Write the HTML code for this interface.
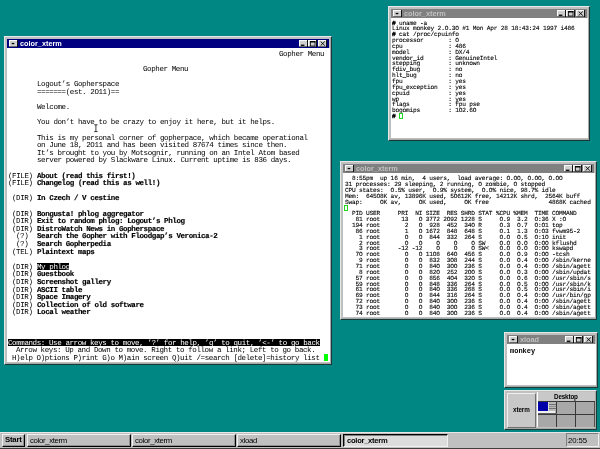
<!DOCTYPE html>
<html><head><meta charset="utf-8"><style>
*{margin:0;padding:0;box-sizing:border-box}
html,body{width:600px;height:449px;overflow:hidden;background:#008784;position:relative}
div{position:absolute}
.frame{background:#c0c0c0;border:1px solid;border-color:#e8e8e8 #1a3a3a #1a3a3a #e8e8e8;box-shadow:inset -1px -1px 0 #a8a8a8}
.act{background:#000080}
.ina{background:#808080}
.ttl{font-family:"Liberation Sans",sans-serif;font-weight:bold;font-size:7.3px;line-height:9px;white-space:pre;will-change:transform}
.act .ttl{color:#fff}
.ina .ttl{color:#c0c0c0}
.btn{background:#c0c0c0;border:1px solid;border-color:#fff #000 #000 #fff;box-shadow:inset -1px -1px 0 #808080}
.client{background:#fff}
.tbtn{background:#c0c0c0;border:1px solid;border-color:#f0f0f0 #000 #000 #f0f0f0;box-shadow:inset -1px -1px 0 #909090}
.inv{background:#000}
.t7{font-family:"Liberation Mono",monospace;font-size:7.5px;letter-spacing:-0.4007px;line-height:7.6px;white-space:pre;color:#000;will-change:transform;text-rendering:geometricPrecision}
.t7.b{font-weight:bold;-webkit-text-stroke:0.15px #000}
.t7.w{color:#fff}
.t6{font-family:"Liberation Mono",monospace;font-size:6.2px;letter-spacing:-0.204px;line-height:5.846px;white-space:pre;color:#000;will-change:transform;text-rendering:geometricPrecision;-webkit-text-stroke:0.1px #000}
.g{font-family:"Liberation Sans",sans-serif;white-space:pre;will-change:transform;color:#000}
svg{position:absolute}
</style></head>
<body>
<div class="frame" style="left:4px;top:36px;width:328px;height:329px"></div>
<div class="act" style="left:7px;top:38.6px;width:322px;height:9.8px"><svg width="9.0" height="7.6" viewBox="0 0 9.0 7.6" style="left:1.60px;top:1.20px"><rect x="0" y="0" width="9.0" height="7.6" fill="#d0d0d0"/><rect x="0" y="0" width="9.0" height="0.9" fill="#fff"/><rect x="0" y="0" width="0.9" height="7.6" fill="#fff"/><rect x="0" y="6.5" width="9.0" height="1.1" fill="#000"/><rect x="8.1" y="0" width="0.9" height="7.6" fill="#000"/><rect x="2.7" y="2.9" width="2.6" height="1.3" fill="#000"/></svg><div class="ttl" style="left:13px;top:0px">color_xterm</div><svg width="9.0" height="7.6" viewBox="0 0 9.0 7.6" style="left:291.80px;top:1.20px"><rect x="0" y="0" width="9.0" height="7.6" fill="#d0d0d0"/><rect x="0" y="0" width="9.0" height="0.9" fill="#fff"/><rect x="0" y="0" width="0.9" height="7.6" fill="#fff"/><rect x="0" y="6.5" width="9.0" height="1.1" fill="#000"/><rect x="8.1" y="0" width="0.9" height="7.6" fill="#000"/><rect x="1.8" y="4.6" width="3.6" height="1.3" fill="#000"/></svg><svg width="9.0" height="7.6" viewBox="0 0 9.0 7.6" style="left:300.80px;top:1.20px"><rect x="0" y="0" width="9.0" height="7.6" fill="#d0d0d0"/><rect x="0" y="0" width="9.0" height="0.9" fill="#fff"/><rect x="0" y="0" width="0.9" height="7.6" fill="#fff"/><rect x="0" y="6.5" width="9.0" height="1.1" fill="#000"/><rect x="8.1" y="0" width="0.9" height="7.6" fill="#000"/><rect x="2.4" y="1.5" width="4.6" height="4.5" fill="none" stroke="#000" stroke-width="0.75"/><rect x="2.0" y="1.2" width="5.4" height="1.3" fill="#000"/></svg><svg width="9.0" height="7.6" viewBox="0 0 9.0 7.6" style="left:311.40px;top:1.20px"><rect x="0" y="0" width="9.0" height="7.6" fill="#d0d0d0"/><rect x="0" y="0" width="9.0" height="0.9" fill="#fff"/><rect x="0" y="0" width="0.9" height="7.6" fill="#fff"/><rect x="0" y="6.5" width="9.0" height="1.1" fill="#000"/><rect x="8.1" y="0" width="0.9" height="7.6" fill="#000"/><path d="M2.6 1.5 L6.8 5.6 M6.8 1.5 L2.6 5.6" stroke="#000" stroke-width="0.9"/></svg></div>
<div class="client" style="left:7px;top:48.4px;width:322.5px;height:313.6px"></div>

<div class="t7 n" style="left:278.60px;top:52.00px">Gopher Menu</div>
<div class="t7 n" style="left:143.30px;top:67.20px">Gopher Menu</div>
<div class="t7 n" style="left:36.70px;top:82.40px">Logout’s Gopherspace</div>
<div class="t7 n" style="left:36.70px;top:90.00px">=======(est. 2O11)==</div>
<div class="t7 n" style="left:36.70px;top:105.20px">Welcome.</div>
<div class="t7 n" style="left:36.70px;top:120.40px">You don’t have to be crazy to enjoy it here, but it helps.</div>
<div class="t7 n" style="left:36.70px;top:135.60px">This is my personal corner of gopherpace, which became operational</div>
<div class="t7 n" style="left:36.70px;top:143.20px">on June 18, 2O11 and has been visited 87674 times since then.</div>
<div class="t7 n" style="left:36.70px;top:150.80px">It’s brought to you by Motsognir, running on an Intel Atom based</div>
<div class="t7 n" style="left:36.70px;top:158.40px">server powered by Slackware Linux. Current uptime is 836 days.</div>
<div class="t7 n" style="left:8.00px;top:173.60px">(FILE)</div>
<div class="t7 b" style="left:36.70px;top:173.60px">About (read this first!)</div>
<div class="t7 n" style="left:8.00px;top:181.20px">(FILE)</div>
<div class="t7 b" style="left:36.70px;top:181.20px">Changelog (read this as well!)</div>
<div class="t7 n" style="left:12.10px;top:196.40px">(DIR)</div>
<div class="t7 b" style="left:36.70px;top:196.40px">In Czech / V cestine</div>
<div class="t7 n" style="left:12.10px;top:211.60px">(DIR)</div>
<div class="t7 b" style="left:36.70px;top:211.60px">Bongusta! phlog aggregator</div>
<div class="t7 n" style="left:12.10px;top:219.20px">(DIR)</div>
<div class="t7 b" style="left:36.70px;top:219.20px">Exit to random phlog: Logout’s Phlog</div>
<div class="t7 n" style="left:12.10px;top:226.80px">(DIR)</div>
<div class="t7 b" style="left:36.70px;top:226.80px">DistroWatch News in Gopherspace</div>
<div class="t7 n" style="left:16.20px;top:234.40px">(?)</div>
<div class="t7 b" style="left:36.70px;top:234.40px">Search the Gopher with Floodgap’s Veronica-2</div>
<div class="t7 n" style="left:16.20px;top:242.00px">(?)</div>
<div class="t7 b" style="left:36.70px;top:242.00px">Search Gopherpedia</div>
<div class="t7 n" style="left:12.10px;top:249.60px">(TEL)</div>
<div class="t7 b" style="left:36.70px;top:249.60px">Plaintext maps</div>
<div class="t7 n" style="left:12.10px;top:264.80px">(DIR)</div>
<div class="inv" style="left:36.70px;top:262.50px;width:32.80px;height:7.60px"></div>
<div class="t7 w" style="left:36.70px;top:264.80px">My phlog</div>
<div class="t7 n" style="left:12.10px;top:272.40px">(DIR)</div>
<div class="t7 b" style="left:36.70px;top:272.40px">Guestbook</div>
<div class="t7 n" style="left:12.10px;top:280.00px">(DIR)</div>
<div class="t7 b" style="left:36.70px;top:280.00px">Screenshot gallery</div>
<div class="t7 n" style="left:12.10px;top:287.60px">(DIR)</div>
<div class="t7 b" style="left:36.70px;top:287.60px">ASCII table</div>
<div class="t7 n" style="left:12.10px;top:295.20px">(DIR)</div>
<div class="t7 b" style="left:36.70px;top:295.20px">Space Imagery</div>
<div class="t7 n" style="left:12.10px;top:302.80px">(DIR)</div>
<div class="t7 b" style="left:36.70px;top:302.80px">Collection of old software</div>
<div class="t7 n" style="left:12.10px;top:310.40px">(DIR)</div>
<div class="t7 b" style="left:36.70px;top:310.40px">Local weather</div>
<div class="inv" style="left:8.00px;top:338.50px;width:311.60px;height:7.60px"></div>
<div class="t7 w" style="left:8.00px;top:340.80px">Commands: Use arrow keys to move, ’?’ for help, ’q’ to quit, ’&lt;-’ to go back</div>
<div class="t7 n" style="left:16.20px;top:348.40px">Arrow keys: Up and Down to move. Right to follow a link; Left to go back.</div>
<div class="t7 n" style="left:12.10px;top:356.00px">H)elp O)ptions P)rint G)o M)ain screen Q)uit /=search [delete]=history list</div>
<div style="left:324px;top:354px;width:4px;height:7px;background:#00ff00"></div>
<svg width="6" height="9" style="left:93px;top:123.5px"><path d="M1.2 0.8 H4.6 M2.9 0.8 V7.6 M1.2 7.6 H4.6" stroke="#000" stroke-width="0.75" fill="none"/></svg>
<div class="frame" style="left:388px;top:6px;width:202px;height:135px"></div>
<div class="ina" style="left:391px;top:8.6px;width:196px;height:9.8px"><svg width="9.0" height="7.6" viewBox="0 0 9.0 7.6" style="left:1.60px;top:1.20px"><rect x="0" y="0" width="9.0" height="7.6" fill="#d0d0d0"/><rect x="0" y="0" width="9.0" height="0.9" fill="#fff"/><rect x="0" y="0" width="0.9" height="7.6" fill="#fff"/><rect x="0" y="6.5" width="9.0" height="1.1" fill="#000"/><rect x="8.1" y="0" width="0.9" height="7.6" fill="#000"/><rect x="2.7" y="2.9" width="2.6" height="1.3" fill="#000"/></svg><div class="ttl" style="left:13px;top:0px">color_xterm</div><svg width="9.0" height="7.6" viewBox="0 0 9.0 7.6" style="left:165.80px;top:1.20px"><rect x="0" y="0" width="9.0" height="7.6" fill="#d0d0d0"/><rect x="0" y="0" width="9.0" height="0.9" fill="#fff"/><rect x="0" y="0" width="0.9" height="7.6" fill="#fff"/><rect x="0" y="6.5" width="9.0" height="1.1" fill="#000"/><rect x="8.1" y="0" width="0.9" height="7.6" fill="#000"/><rect x="1.8" y="4.6" width="3.6" height="1.3" fill="#000"/></svg><svg width="9.0" height="7.6" viewBox="0 0 9.0 7.6" style="left:174.80px;top:1.20px"><rect x="0" y="0" width="9.0" height="7.6" fill="#d0d0d0"/><rect x="0" y="0" width="9.0" height="0.9" fill="#fff"/><rect x="0" y="0" width="0.9" height="7.6" fill="#fff"/><rect x="0" y="6.5" width="9.0" height="1.1" fill="#000"/><rect x="8.1" y="0" width="0.9" height="7.6" fill="#000"/><rect x="2.4" y="1.5" width="4.6" height="4.5" fill="none" stroke="#000" stroke-width="0.75"/><rect x="2.0" y="1.2" width="5.4" height="1.3" fill="#000"/></svg><svg width="9.0" height="7.6" viewBox="0 0 9.0 7.6" style="left:185.40px;top:1.20px"><rect x="0" y="0" width="9.0" height="7.6" fill="#d0d0d0"/><rect x="0" y="0" width="9.0" height="0.9" fill="#fff"/><rect x="0" y="0" width="0.9" height="7.6" fill="#fff"/><rect x="0" y="6.5" width="9.0" height="1.1" fill="#000"/><rect x="8.1" y="0" width="0.9" height="7.6" fill="#000"/><path d="M2.6 1.5 L6.8 5.6 M6.8 1.5 L2.6 5.6" stroke="#000" stroke-width="0.9"/></svg></div>
<div class="client" style="left:391px;top:18.4px;width:196.5px;height:119.6px"></div>

<div class="t6" style="left:392.40px;top:20.50px"><span style="font-weight:bold;-webkit-text-stroke:0.4px #000">#</span> uname -a</div>
<div class="t6" style="left:392.40px;top:26.35px">Linux monkey 2.O.3O #1 Mon Apr 28 18:43:24 1997 i486</div>
<div class="t6" style="left:392.40px;top:32.19px"><span style="font-weight:bold;-webkit-text-stroke:0.4px #000">#</span> cat /proc/cpuinfo</div>
<div class="t6" style="left:392.40px;top:38.04px">processor       : O</div>
<div class="t6" style="left:392.40px;top:43.88px">cpu             : 486</div>
<div class="t6" style="left:392.40px;top:49.73px">model           : DX/4</div>
<div class="t6" style="left:392.40px;top:55.58px">vendor_id       : GenuineIntel</div>
<div class="t6" style="left:392.40px;top:61.42px">stepping        : unknown</div>
<div class="t6" style="left:392.40px;top:67.27px">fdiv_bug        : no</div>
<div class="t6" style="left:392.40px;top:73.11px">hlt_bug         : no</div>
<div class="t6" style="left:392.40px;top:78.96px">fpu             : yes</div>
<div class="t6" style="left:392.40px;top:84.81px">fpu_exception   : yes</div>
<div class="t6" style="left:392.40px;top:90.65px">cpuid           : yes</div>
<div class="t6" style="left:392.40px;top:96.50px">wp              : yes</div>
<div class="t6" style="left:392.40px;top:102.34px">flags           : fpu pse</div>
<div class="t6" style="left:392.40px;top:108.19px">bogomips        : 1O2.6O</div>
<div class="t6" style="left:392.40px;top:114.04px"><span style="font-weight:bold;-webkit-text-stroke:0.4px #000">#</span></div>
<div style="left:399.3px;top:113.2px;width:3.6px;height:6px;border:0.7px solid #20d820"></div>
<div class="frame" style="left:340px;top:161px;width:257px;height:159px"></div>
<div class="ina" style="left:343px;top:163.6px;width:251px;height:9.8px"><svg width="9.0" height="7.6" viewBox="0 0 9.0 7.6" style="left:1.60px;top:1.20px"><rect x="0" y="0" width="9.0" height="7.6" fill="#d0d0d0"/><rect x="0" y="0" width="9.0" height="0.9" fill="#fff"/><rect x="0" y="0" width="0.9" height="7.6" fill="#fff"/><rect x="0" y="6.5" width="9.0" height="1.1" fill="#000"/><rect x="8.1" y="0" width="0.9" height="7.6" fill="#000"/><rect x="2.7" y="2.9" width="2.6" height="1.3" fill="#000"/></svg><div class="ttl" style="left:13px;top:0px">color_xterm</div><svg width="9.0" height="7.6" viewBox="0 0 9.0 7.6" style="left:220.80px;top:1.20px"><rect x="0" y="0" width="9.0" height="7.6" fill="#d0d0d0"/><rect x="0" y="0" width="9.0" height="0.9" fill="#fff"/><rect x="0" y="0" width="0.9" height="7.6" fill="#fff"/><rect x="0" y="6.5" width="9.0" height="1.1" fill="#000"/><rect x="8.1" y="0" width="0.9" height="7.6" fill="#000"/><rect x="1.8" y="4.6" width="3.6" height="1.3" fill="#000"/></svg><svg width="9.0" height="7.6" viewBox="0 0 9.0 7.6" style="left:229.80px;top:1.20px"><rect x="0" y="0" width="9.0" height="7.6" fill="#d0d0d0"/><rect x="0" y="0" width="9.0" height="0.9" fill="#fff"/><rect x="0" y="0" width="0.9" height="7.6" fill="#fff"/><rect x="0" y="6.5" width="9.0" height="1.1" fill="#000"/><rect x="8.1" y="0" width="0.9" height="7.6" fill="#000"/><rect x="2.4" y="1.5" width="4.6" height="4.5" fill="none" stroke="#000" stroke-width="0.75"/><rect x="2.0" y="1.2" width="5.4" height="1.3" fill="#000"/></svg><svg width="9.0" height="7.6" viewBox="0 0 9.0 7.6" style="left:240.40px;top:1.20px"><rect x="0" y="0" width="9.0" height="7.6" fill="#d0d0d0"/><rect x="0" y="0" width="9.0" height="0.9" fill="#fff"/><rect x="0" y="0" width="0.9" height="7.6" fill="#fff"/><rect x="0" y="6.5" width="9.0" height="1.1" fill="#000"/><rect x="8.1" y="0" width="0.9" height="7.6" fill="#000"/><path d="M2.6 1.5 L6.8 5.6 M6.8 1.5 L2.6 5.6" stroke="#000" stroke-width="0.9"/></svg></div>
<div class="client" style="left:343px;top:173.4px;width:251.5px;height:143.6px"></div>

<div class="t6" style="left:344.50px;top:176.30px">  8:55pm  up 16 min,  4 users,  load average: O.OO, O.OO, O.OO</div>
<div class="t6" style="left:344.50px;top:182.15px">31 processes: 29 sleeping, 2 running, O zombie, O stopped</div>
<div class="t6" style="left:344.50px;top:187.99px">CPU states:  O.5% user,  O.9% system,  O.O% nice, 98.7% idle</div>
<div class="t6" style="left:344.50px;top:193.84px">Mem:  645O8K av, 13896K used, 5O612K free, 14212K shrd,  2564K buff</div>
<div class="t6" style="left:344.50px;top:199.68px">Swap:     OK av,     OK used,     OK free                 4868K cached</div>
<div class="t6" style="left:344.50px;top:211.38px">  PID USER     PRI  NI SIZE  RES SHRD STAT %CPU %MEM  TIME COMMAND</div>
<div class="t6" style="left:344.50px;top:217.22px">   81 root      13   O 3772 2O92 1228 S     O.9  3.2  O:36 X :O</div>
<div class="t6" style="left:344.50px;top:223.07px">  194 root       2   O  928  452  34O R     O.3  O.7  O:O1 top</div>
<div class="t6" style="left:344.50px;top:228.91px">   86 root       1   O 1672  848  648 S     O.1  1.3  O:O3 fvwm95-2</div>
<div class="t6" style="left:344.50px;top:234.76px">    1 root       O   O  844  332  264 S     O.O  O.5  O:1O init</div>
<div class="t6" style="left:344.50px;top:240.61px">    2 root       O   O    O    O    O SW    O.O  O.O  O:OO kflushd</div>
<div class="t6" style="left:344.50px;top:246.45px">    3 root     -12 -12    O    O    O SW&lt;   O.O  O.O  O:OO kswapd</div>
<div class="t6" style="left:344.50px;top:252.30px">   7O root       O   O 11O8  64O  456 S     O.O  O.9  O:OO -tcsh</div>
<div class="t6" style="left:344.50px;top:258.14px">    9 root       O   O  832  3O8  244 S     O.O  O.4  O:OO /sbin/kerne</div>
<div class="t6" style="left:344.50px;top:263.99px">   71 root       O   O  84O  3OO  236 S     O.O  O.4  O:OO /sbin/agett</div>
<div class="t6" style="left:344.50px;top:269.84px">    8 root       O   O  82O  252  2OO S     O.O  O.3  O:OO /sbin/updat</div>
<div class="t6" style="left:344.50px;top:275.68px">   57 root       O   O  856  4O4  32O S     O.O  O.6  O:OO /usr/sbin/s</div>
<div class="t6" style="left:344.50px;top:281.53px">   59 root       O   O  848  336  264 S     O.O  O.5  O:OO /usr/sbin/k</div>
<div class="t6" style="left:344.50px;top:287.37px">   61 root       O   O  84O  336  268 S     O.O  O.5  O:OO /usr/sbin/i</div>
<div class="t6" style="left:344.50px;top:293.22px">   69 root       O   O  844  316  264 S     O.O  O.4  O:OO /usr/bin/gp</div>
<div class="t6" style="left:344.50px;top:299.07px">   72 root       O   O  84O  3OO  236 S     O.O  O.4  O:OO /sbin/agett</div>
<div class="t6" style="left:344.50px;top:304.91px">   73 root       O   O  84O  3OO  236 S     O.O  O.4  O:OO /sbin/agett</div>
<div class="t6" style="left:344.50px;top:310.76px">   74 root       O   O  84O  3OO  236 S     O.O  O.4  O:OO /sbin/agett</div>
<div style="left:344.2px;top:204.6px;width:3.6px;height:6px;border:0.7px solid #20d820"></div>
<div class="frame" style="left:504px;top:332px;width:94px;height:56px"></div>
<div class="ina" style="left:507px;top:334.6px;width:88px;height:9.8px"><svg width="9.0" height="7.6" viewBox="0 0 9.0 7.6" style="left:1.60px;top:1.20px"><rect x="0" y="0" width="9.0" height="7.6" fill="#d0d0d0"/><rect x="0" y="0" width="9.0" height="0.9" fill="#fff"/><rect x="0" y="0" width="0.9" height="7.6" fill="#fff"/><rect x="0" y="6.5" width="9.0" height="1.1" fill="#000"/><rect x="8.1" y="0" width="0.9" height="7.6" fill="#000"/><rect x="2.7" y="2.9" width="2.6" height="1.3" fill="#000"/></svg><div class="ttl" style="left:13px;top:0px">xload</div><svg width="9.0" height="7.6" viewBox="0 0 9.0 7.6" style="left:57.80px;top:1.20px"><rect x="0" y="0" width="9.0" height="7.6" fill="#d0d0d0"/><rect x="0" y="0" width="9.0" height="0.9" fill="#fff"/><rect x="0" y="0" width="0.9" height="7.6" fill="#fff"/><rect x="0" y="6.5" width="9.0" height="1.1" fill="#000"/><rect x="8.1" y="0" width="0.9" height="7.6" fill="#000"/><rect x="1.8" y="4.6" width="3.6" height="1.3" fill="#000"/></svg><svg width="9.0" height="7.6" viewBox="0 0 9.0 7.6" style="left:66.80px;top:1.20px"><rect x="0" y="0" width="9.0" height="7.6" fill="#d0d0d0"/><rect x="0" y="0" width="9.0" height="0.9" fill="#fff"/><rect x="0" y="0" width="0.9" height="7.6" fill="#fff"/><rect x="0" y="6.5" width="9.0" height="1.1" fill="#000"/><rect x="8.1" y="0" width="0.9" height="7.6" fill="#000"/><rect x="2.4" y="1.5" width="4.6" height="4.5" fill="none" stroke="#000" stroke-width="0.75"/><rect x="2.0" y="1.2" width="5.4" height="1.3" fill="#000"/></svg><svg width="9.0" height="7.6" viewBox="0 0 9.0 7.6" style="left:77.40px;top:1.20px"><rect x="0" y="0" width="9.0" height="7.6" fill="#d0d0d0"/><rect x="0" y="0" width="9.0" height="0.9" fill="#fff"/><rect x="0" y="0" width="0.9" height="7.6" fill="#fff"/><rect x="0" y="6.5" width="9.0" height="1.1" fill="#000"/><rect x="8.1" y="0" width="0.9" height="7.6" fill="#000"/><path d="M2.6 1.5 L6.8 5.6 M6.8 1.5 L2.6 5.6" stroke="#000" stroke-width="0.9"/></svg></div>
<div class="client" style="left:507px;top:344.4px;width:88.5px;height:40.6px"></div>

<div class="g" style="left:509.6px;top:347px;font-size:7px;font-weight:bold;line-height:8px;font-family:'Liberation Mono'">monkey</div>
<div class="frame" style="left:504px;top:390px;width:93px;height:40px"></div>
<div style="left:506.5px;top:392.5px;width:29.5px;height:35px;background:#c8c8c8;border:1px solid;border-color:#f0f0f0 #707070 #707070 #f0f0f0"></div>
<div class="g" style="left:512.6px;top:406px;font-size:6.3px;font-weight:bold;line-height:8px;letter-spacing:-0.1px">xterm</div>
<div style="left:536.5px;top:392px;width:58.5px;height:35px;background:#a8a8a8;border-left:1px solid #fff;border-right:1px solid #505050"></div>
<div style="left:537.5px;top:392px;width:57px;height:9.3px;background:#c8c8c8"></div>
<div class="g" style="left:553.8px;top:393.4px;font-size:6.3px;font-weight:bold;line-height:8px;letter-spacing:-0.15px">Desktop</div>
<div style="left:537.5px;top:401px;width:57px;height:1px;background:#383838"></div>
<div style="left:537.5px;top:414px;width:57px;height:1px;background:#383838"></div>
<div style="left:556px;top:401px;width:1px;height:26px;background:#383838"></div>
<div style="left:575px;top:401px;width:1px;height:26px;background:#383838"></div>
<div style="left:547.5px;top:402px;width:8.5px;height:11px;background:#b8b8b8;border-left:1px solid #e0e0e0"></div>
<div style="left:549px;top:403.5px;width:6.5px;height:1px;background:#707070"></div>
<div style="left:549px;top:405.5px;width:6.5px;height:1px;background:#909090"></div>
<div style="left:549px;top:408px;width:6.5px;height:1px;background:#707070"></div>
<div style="left:553px;top:411.5px;width:2px;height:2px;background:#383838"></div>
<div style="left:538px;top:402px;width:10px;height:9.2px;background:#0000a8"></div>
<div style="left:538px;top:411.2px;width:17px;height:2px;background:#f0f0f0"></div>
<div style="left:537.5px;top:413.2px;width:19px;height:1px;background:#606060"></div>
<div style="left:0;top:431.5px;width:600px;height:17.5px;background:#c0c0c0;border-top:1px solid #e8e8e8"></div>
<div style="left:0;top:448.3px;width:600px;height:0.7px;background:#404040"></div>
<div class="tbtn" style="left:2px;top:433.6px;width:23px;height:13.2px"></div>
<div class="g" style="left:4.6px;top:435.2px;font-size:7.8px;font-weight:bold;line-height:9px;letter-spacing:-0.25px">Start</div>
<div class="tbtn" style="left:27px;top:433.6px;width:104px;height:13.2px"></div>
<div class="g" style="left:30.4px;top:436px;font-size:7.8px;line-height:9px;letter-spacing:-0.34px">color_xterm</div>
<div class="tbtn" style="left:132px;top:433.6px;width:104px;height:13.2px"></div>
<div class="g" style="left:135.4px;top:436px;font-size:7.8px;line-height:9px;letter-spacing:-0.34px">color_xterm</div>
<div class="tbtn" style="left:237px;top:433.6px;width:104px;height:13.2px"></div>
<div class="g" style="left:240.4px;top:436px;font-size:7.8px;line-height:9px;letter-spacing:-0.34px">xload</div>
<div style="left:343px;top:433.6px;width:105px;height:13.2px;background:#dcdcdc;border:1px solid;border-color:#000 #f0f0f0 #f0f0f0 #000;box-shadow:inset 1px 1px 0 #808080"></div>
<div class="g" style="left:346.5px;top:435.7px;font-size:7.6px;font-weight:bold;line-height:9px;letter-spacing:-0.28px">color_xterm</div>
<div style="left:566px;top:433.4px;width:32.6px;height:14px;border:1px solid;border-color:#808080 #f0f0f0 #f0f0f0 #808080"></div>
<div class="g" style="left:567.6px;top:436px;font-size:7.8px;line-height:9px;letter-spacing:-0.1px">20:55</div>
</body></html>
